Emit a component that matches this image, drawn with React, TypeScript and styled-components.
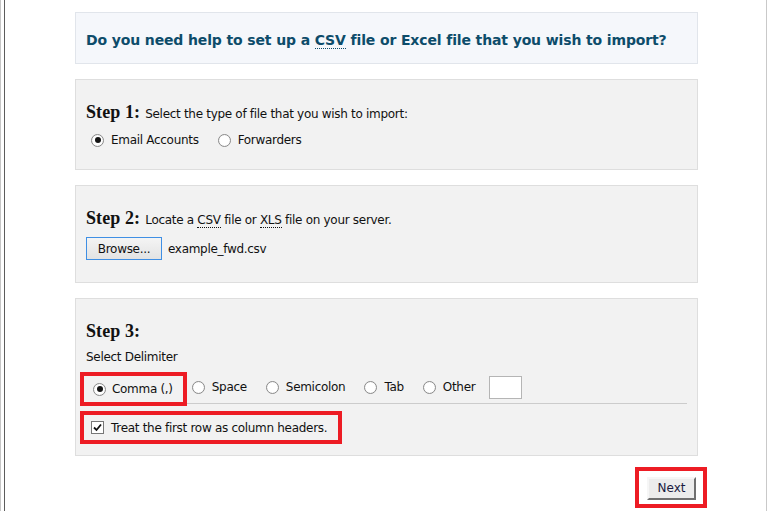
import React from 'react'
import styled, { createGlobalStyle } from 'styled-components'

// ============================================================================
// GLOBAL
// ============================================================================

const GlobalStyle = createGlobalStyle`
    html, body {
        margin: 0;
        padding: 0;
        background: #ffffff;
    }
    body {
        font-family: "DejaVu Sans", Verdana, sans-serif;
        font-size: 12px;
        letter-spacing: -0.3px;
        color: #111111;
    }
`

// ============================================================================
// STYLED COMPONENTS
// ============================================================================

const Frame = styled.div`
    height: 511px;
    box-sizing: border-box;
    border-left: 1px solid #c6c6c6;
    padding-left: 3px;
`

const Page = styled.div`
    width: 763px;
    height: 100%;
    box-sizing: border-box;
    border-left: 1px solid #5c5c5c;
    border-right: 1px solid #c9c9c9;
    padding: 12px 0 0 70px;
`

const Column = styled.div`
    width: 623px;
    display: flex;
    flex-direction: column;
    gap: 15px;
`

const HelpBox = styled.div`
    height: 52px;
    box-sizing: border-box;
    display: flex;
    align-items: center;
    padding: 4px 10px 0;
    background: #f5f7fb;
    border: 1px solid #e1e5eb;
    color: #0d4c6a;
    font-size: 14px;
    font-weight: bold;
    letter-spacing: -0.13px;
    white-space: nowrap;
`

const Abbr = styled.abbr`
    text-decoration: none;
    border-bottom: 1px dotted currentColor;
`

const StepBox = styled.div<{ $bottom: number }>`
    display: flex;
    flex-direction: column;
    align-items: flex-start;
    padding: 22px 10px ${({ $bottom }) => $bottom}px;
    background: #f2f2f2;
    border: 1px solid #dedede;
`

const StepLine = styled.div`
    height: 20px;
    display: flex;
    align-items: baseline;
    gap: 5px;
    white-space: nowrap;
`

const StepLabel = styled.span`
    font-family: "Liberation Serif", "Times New Roman", serif;
    font-weight: bold;
    font-size: 18px;
    letter-spacing: 0.1px;
    color: #111111;
`

const OptionRow = styled.div<{ $top: number }>`
    height: 20px;
    margin-top: ${({ $top }) => $top}px;
    display: flex;
    align-items: center;
`

const Option = styled.label<{ $lead?: number }>`
    display: inline-flex;
    align-items: center;
    gap: 7px;
    margin-left: ${({ $lead }) => $lead ?? 0}px;
    margin-right: 19px;
    white-space: nowrap;
`

const Radio = styled.span<{ $checked?: boolean }>`
    width: 13px;
    height: 13px;
    box-sizing: border-box;
    border-radius: 50%;
    border: 1px solid #8a8a8a;
    background: radial-gradient(circle, #ffffff 55%, #e4e4e4 100%);
    display: inline-flex;
    align-items: center;
    justify-content: center;

    &::after {
        content: '';
        width: 6px;
        height: 6px;
        border-radius: 50%;
        background: ${({ $checked }) => ($checked ? '#151515' : 'transparent')};
    }
`

const Check = styled.span`
    width: 13px;
    height: 13px;
    box-sizing: border-box;
    border: 1px solid #777777;
    background: #ffffff;
    display: inline-flex;
    align-items: center;
    justify-content: center;
`

const FileRow = styled.div`
    margin-top: 9px;
    display: flex;
    align-items: center;
    gap: 6px;
`

const BrowseButton = styled.button`
    width: 76px;
    height: 23px;
    padding: 0;
    font-family: inherit;
    font-size: 12px;
    letter-spacing: -0.3px;
    color: #111111;
    border: 1px solid #3f8fe4;
    background: linear-gradient(#f4f4f4, #e3e3e3);
`

const PlainLine = styled.div<{ $top: number }>`
    height: 20px;
    margin-top: ${({ $top }) => $top}px;
    display: flex;
    align-items: center;
`

const DelimiterRow = styled.div`
    align-self: stretch;
    height: 32px;
    margin-top: 4px;
    display: flex;
    align-items: center;
    border-bottom: 1px solid #cccccc;
`

const Highlight = styled.div<{ $pad: string }>`
    display: flex;
    align-items: center;
    gap: 7px;
    border: 4px solid #ed1c24;
    padding: ${({ $pad }) => $pad};
    white-space: nowrap;
`

const CommaHighlight = styled(Highlight)`
    align-self: flex-start;
    height: 34px;
    box-sizing: border-box;
    margin: 1px 5px 0 -6px;
    gap: 6px;
`

const HeaderHighlight = styled(Highlight)`
    height: 33px;
    box-sizing: border-box;
    margin: 7px 0 0 -6px;
`

const OtherInput = styled.input`
    width: 33px;
    height: 23px;
    box-sizing: border-box;
    margin: 1px 0 0 -5px;
    border: 1px solid #b5b5b5;
    background: #ffffff;
`

const ActionRow = styled.div`
    display: flex;
    justify-content: flex-end;
    margin: -4px -9px 0 0;
`

const NextButton = styled.button`
    width: 49px;
    height: 23px;
    padding: 0 0 1px;
    font-family: "DejaVu Sans", Verdana, sans-serif;
    font-size: 12px;
    color: #1b1b40;
    background: #ececec;
    border: 2px solid;
    border-color: #f6f6f6 #6f6f6f #6f6f6f #f6f6f6;
`

// ============================================================================
// COMPONENT
// ============================================================================

const delimiters = ['Space', 'Semicolon', 'Tab', 'Other']

const CheckMark = () => (
    <svg width="9" height="9" viewBox="0 0 9 9">
        <path d="M1 4.5 L3.5 7 L8 1.5" fill="none" stroke="#111" strokeWidth="1.8" />
    </svg>
)

const App: React.FC = () => {
    return (
        <>
            <GlobalStyle />
            <Frame>
                <Page>
                    <Column>
                        <HelpBox>
                            <span>
                                Do you need help to set up a <Abbr title="Comma-Separated Values">CSV</Abbr> file
                                or Excel file that you wish to import?
                            </span>
                        </HelpBox>

                        <StepBox $bottom={19}>
                            <StepLine>
                                <StepLabel>Step 1:</StepLabel>
                                <span>Select the type of file that you wish to import:</span>
                            </StepLine>
                            <OptionRow $top={8}>
                                <Option $lead={5}>
                                    <Radio $checked />
                                    Email Accounts
                                </Option>
                                <Option>
                                    <Radio />
                                    Forwarders
                                </Option>
                            </OptionRow>
                        </StepBox>

                        <StepBox $bottom={22}>
                            <StepLine>
                                <StepLabel>Step 2:</StepLabel>
                                <span>
                                    Locate a <Abbr>CSV</Abbr> file or <Abbr>XLS</Abbr> file on your server.
                                </span>
                            </StepLine>
                            <FileRow>
                                <BrowseButton>Browse...</BrowseButton>
                                <span>example_fwd.csv</span>
                            </FileRow>
                        </StepBox>

                        <StepBox $bottom={11}>
                            <StepLine>
                                <StepLabel>Step 3:</StepLabel>
                            </StepLine>
                            <PlainLine $top={6}>Select Delimiter</PlainLine>
                            <DelimiterRow>
                                <CommaHighlight $pad="0 10px 0 9px">
                                    <Radio $checked />
                                    Comma (,)
                                </CommaHighlight>
                                {delimiters.map((d) => (
                                    <Option key={d}>
                                        <Radio />
                                        {d}
                                    </Option>
                                ))}
                                <OtherInput type="text" />
                            </DelimiterRow>
                            <HeaderHighlight $pad="0 11px 0 7px">
                                <Check>
                                    <CheckMark />
                                </Check>
                                Treat the first row as column headers.
                            </HeaderHighlight>
                        </StepBox>

                        <ActionRow>
                            <Highlight $pad="6px 7px 4px 8px">
                                <NextButton>Next</NextButton>
                            </Highlight>
                        </ActionRow>
                    </Column>
                </Page>
            </Frame>
        </>
    )
}

export default App
